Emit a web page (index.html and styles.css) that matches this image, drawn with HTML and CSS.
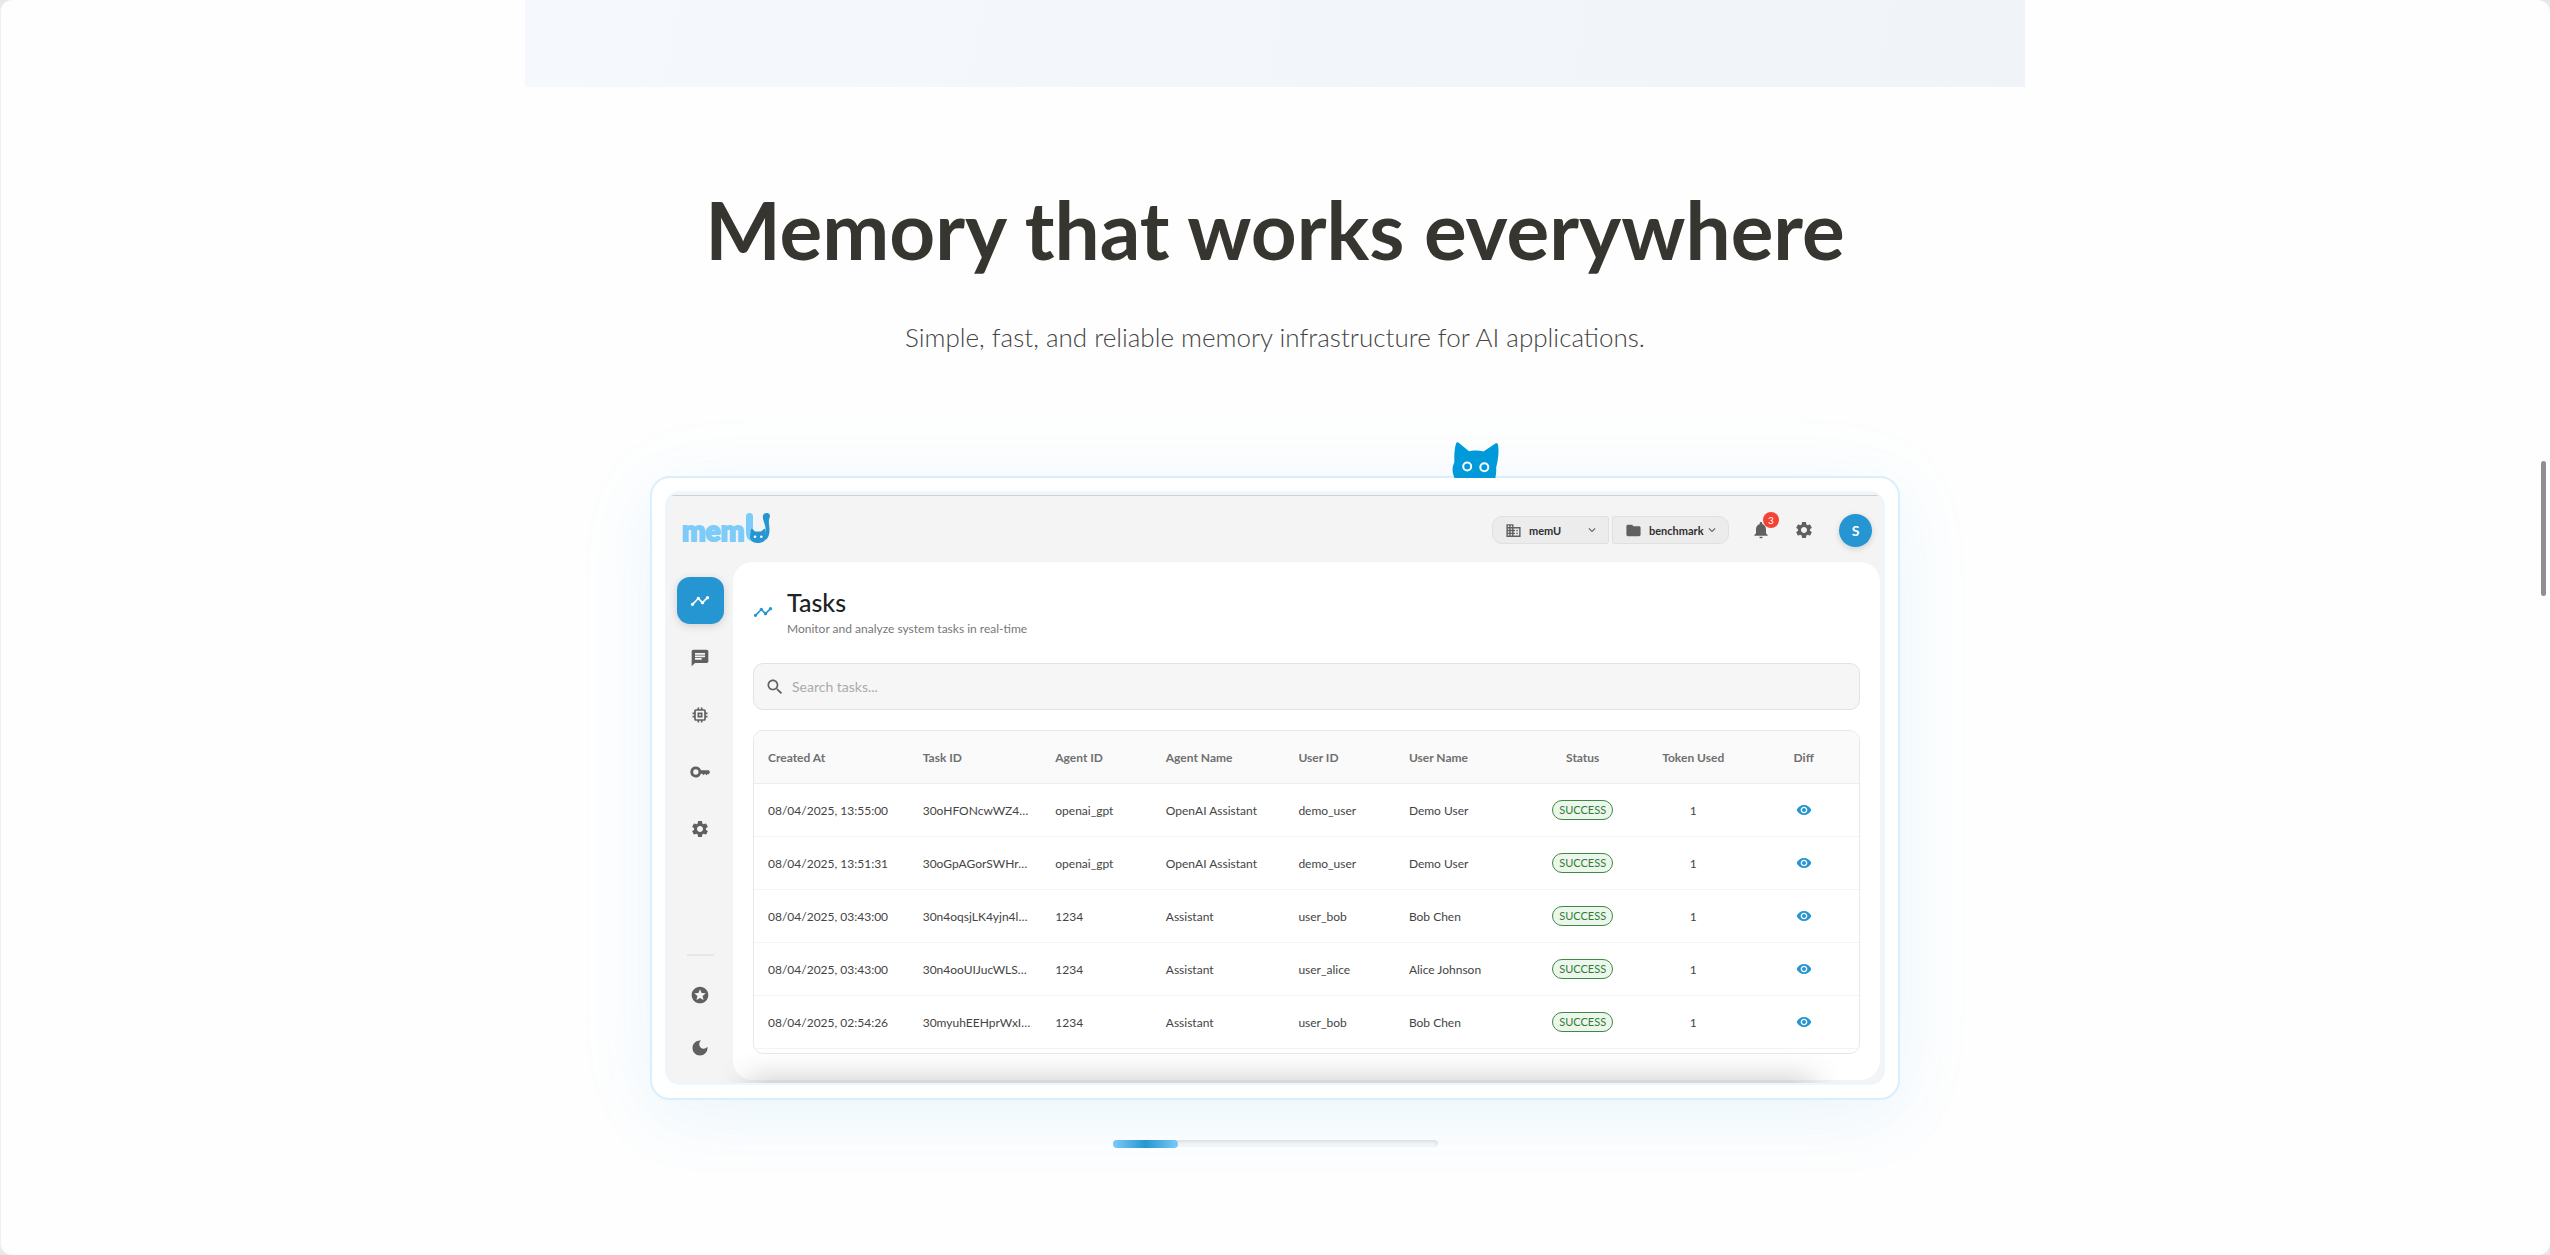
FILE: index.html
```html
<!DOCTYPE html>
<html lang="en">
<head>
  <meta charset="UTF-8">
  <meta name="viewport" content="width=device-width, initial-scale=1.0">
  <title>memU</title>
  <link rel="stylesheet" href="styles.css">
</head>
<body>
  <!-- shared icons -->
  <svg class="sprite" aria-hidden="true">
    <symbol id="i-trend" viewBox="0 0 24 24"><path d="M23 8c0 1.1-.9 2-2 2-.18 0-.35-.02-.51-.07l-3.56 3.55c.05.16.07.34.07.52 0 1.1-.9 2-2 2s-2-.9-2-2c0-.18.02-.36.07-.52l-2.55-2.55c-.16.05-.34.07-.52.07s-.36-.02-.52-.07l-4.55 4.56c.05.16.07.33.07.51 0 1.1-.9 2-2 2s-2-.9-2-2 .9-2 2-2c.18 0 .35.02.51.07l4.56-4.55C8.02 9.36 8 9.18 8 9c0-1.1.9-2 2-2s2 .9 2 2c0 .18-.02.36-.07.52l2.55 2.55c.16-.05.34-.07.52-.07s.36.02.52.07l3.55-3.56C19.02 8.35 19 8.18 19 8c0-1.1.9-2 2-2s2 .9 2 2z"/></symbol>
    <symbol id="i-chat" viewBox="0 0 24 24"><path d="M20 2H4c-1.1 0-1.99.9-1.99 2L2 22l4-4h14c1.1 0 2-.9 2-2V4c0-1.1-.9-2-2-2zM6 9h12v2H6V9zm8 5H6v-2h8v2zm4-6H6V6h12v2z"/></symbol>
    <symbol id="i-chip" viewBox="0 0 24 24"><path d="M15 9H9v6h6V9zm-2 4h-2v-2h2v2zm8-2V9h-2V7c0-1.1-.9-2-2-2h-2V3h-2v2h-2V3H9v2H7c-1.1 0-2 .9-2 2v2H3v2h2v2H3v2h2v2c0 1.1.9 2 2 2h2v2h2v-2h2v2h2v-2h2c1.1 0 2-.9 2-2v-2h2v-2h-2v-2h2zm-4 6H7V7h10v10z"/></symbol>
    <symbol id="i-key" viewBox="0 0 24 24"><path fill-rule="evenodd" d="M7 5.500a6.500 6.500 0 1 0 6.100 8.700h1.600l1.500 1.800 1.800-1.800 1.800 1.800 1.800-1.800 1 .8 1.400-3-1.400-2.200h-9.500A6.500 6.500 0 0 0 7 5.500zM7 8.800a3.200 3.200 0 1 1 0 6.400 3.200 3.200 0 0 1 0-6.400z"/></symbol>
    <symbol id="i-gear" viewBox="0 0 24 24"><path d="M19.14 12.94c.04-.3.06-.61.06-.94 0-.32-.02-.64-.07-.94l2.03-1.58c.18-.14.23-.41.12-.61l-1.92-3.32c-.12-.22-.37-.29-.59-.22l-2.39.96c-.5-.38-1.03-.7-1.62-.94l-.36-2.54c-.04-.24-.24-.41-.48-.41h-3.84c-.24 0-.43.17-.47.41l-.36 2.54c-.59.24-1.13.57-1.62.94l-2.39-.96c-.22-.08-.47 0-.59.22L2.74 8.87c-.12.21-.08.47.12.61l2.03 1.58c-.05.3-.09.63-.09.94s.02.64.07.94l-2.03 1.58c-.18.14-.23.41-.12.61l1.92 3.32c.12.22.37.29.59.22l2.39-.96c.5.38 1.03.7 1.62.94l.36 2.54c.05.24.24.41.48.41h3.84c.24 0 .44-.17.47-.41l.36-2.54c.59-.24 1.13-.56 1.62-.94l2.39.96c.22.08.47 0 .59-.22l1.92-3.32c.12-.22.07-.47-.12-.61l-2.01-1.58zM12 15.6c-1.98 0-3.6-1.62-3.6-3.6s1.62-3.6 3.6-3.6 3.6 1.62 3.6 3.6-1.62 3.6-3.6 3.6z"/></symbol>
    <symbol id="i-star" viewBox="0 0 24 24"><path d="M11.99 2C6.47 2 2 6.48 2 12s4.47 10 9.99 10C17.52 22 22 17.52 22 12S17.52 2 11.99 2zm4.24 16L12 15.45 7.77 18l1.12-4.81-3.73-3.23 4.92-.42L12 5l1.92 4.53 4.92.42-3.73 3.23L16.23 18z"/></symbol>
    <symbol id="i-moon" viewBox="0 0 24 24"><path d="M12 3c-4.97 0-9 4.03-9 9s4.03 9 9 9 9-4.03 9-9c0-.46-.04-.92-.1-1.36-.98 1.37-2.58 2.26-4.4 2.26-2.98 0-5.4-2.42-5.4-5.4 0-1.81.89-3.42 2.26-4.4-.44-.06-.9-.1-1.36-.1z"/></symbol>
    <symbol id="i-building" viewBox="0 0 24 24"><path d="M12 7V3H2v18h20V7H12zM6 19H4v-2h2v2zm0-4H4v-2h2v2zm0-4H4V9h2v2zm0-4H4V5h2v2zm4 12H8v-2h2v2zm0-4H8v-2h2v2zm0-4H8V9h2v2zm0-4H8V5h2v2zm10 12h-8v-2h2v-2h-2v-2h2v-2h-2V9h8v10zm-2-8h-2v2h2v-2zm0 4h-2v2h2v-2z"/></symbol>
    <symbol id="i-folder" viewBox="0 0 24 24"><path d="M10 4H4c-1.1 0-1.99.9-1.99 2L2 18c0 1.1.9 2 2 2h16c1.1 0 2-.9 2-2V8c0-1.1-.9-2-2-2h-8l-2-2z"/></symbol>
    <symbol id="i-down" viewBox="0 0 24 24"><path d="M7.41 8.59 12 13.17l4.59-4.58L18 10l-6 6-6-6 1.41-1.41z"/></symbol>
    <symbol id="i-bell" viewBox="0 0 24 24"><path d="M12 22c1.1 0 2-.9 2-2h-4c0 1.1.89 2 2 2zm6-6v-5c0-3.07-1.64-5.64-4.5-6.32V4c0-.83-.67-1.5-1.5-1.5s-1.5.67-1.5 1.5v.68C7.63 5.36 6 7.92 6 11v5l-2 2v1h16v-1l-2-2z"/></symbol>
    <symbol id="i-search" viewBox="0 0 24 24"><path d="M15.5 14h-.79l-.28-.27C15.41 12.59 16 11.11 16 9.5 16 5.91 13.09 3 9.5 3S3 5.91 3 9.5 5.91 16 9.5 16c1.61 0 3.09-.59 4.23-1.57l.27.28v.79l5 4.99L20.49 19l-4.99-5zm-6 0C7.01 14 5 11.99 5 9.5S7.01 5 9.5 5 14 7.01 14 9.5 11.99 14 9.5 14z"/></symbol>
    <symbol id="i-eye" viewBox="0 0 24 24"><path d="M12 4.5C7 4.5 2.73 7.61 1 12c1.73 4.39 6 7.5 11 7.5s9.27-3.11 11-7.5c-1.73-4.39-6-7.5-11-7.5zM12 17c-2.76 0-5-2.24-5-5s2.24-5 5-5 5 2.24 5 5-2.24 5-5 5zm0-8c-1.66 0-3 1.34-3 3s1.34 3 3 3 3-1.34 3-3-1.34-3-3-3z"/></symbol>
  </svg>

  <div class="page">
    <div class="band"></div>

    <section class="showcase">
      <h1 class="title">Memory that works everywhere</h1>
      <p class="subtitle">Simple, fast, and reliable memory infrastructure for AI applications.</p>

      <div class="card">
        <svg class="cat" viewBox="0 0 48 36" aria-hidden="true">
          <path fill="#0099d9" d="M2.600 36C.6 32 .2 27 .9 24.500c.5-2 1.400-3.500 1.500-5C2 13 2.500 7 4 1.500 4.500.2 6 0 7 .9L17 9.200c3-1 10-1 14.500.3L43 1.700c1.200-.8 2.700-.4 3 1 1 5 .6 14-1.800 22.800.2 4-.2 8-.9 10.500z"/>
          <g fill="#0099d9" stroke="#fff" stroke-width="2">
            <circle cx="15.200" cy="24.500" r="4"/>
            <circle cx="32.300" cy="25.300" r="4"/>
          </g>
        </svg>

        <div class="app">
          <header class="topbar">
            <a class="logo" href="#" aria-label="memU">
              <span class="logo-text">mem</span>
              <svg class="logo-cat" viewBox="66 0 25 31">
                <path fill="#7ccbf8" d="M66 3.500a3.500 3.500 0 0 1 7 0V19c0 4 7 4 10 2l2 6c-8 5-19 2-19-7z"/>
                <path fill="#2596d1" d="M71 16.500c0-1 1-1 1.500-.5l2.500 2.500h6l3-2.500c.6-.5 1.500-.2 1.500.7L86 24c0 4-3.500 6-8.500 6S70 27 70 23.500z"/>
                <path fill="#2596d1" d="M83.500 7.500C82 3 83 0 86.700 0c3 0 4 2.600 2.800 5-1.500 3.500 0 7 0 11.500 0 4.500-1 8.500-4 10.500-.8-3 .2-6 .2-10 0-4-1.400-6.500-2.200-9.500z"/>
                <circle cx="75" cy="23.800" r="1.300" fill="#fff"/>
                <circle cx="81.300" cy="23.800" r="1.300" fill="#fff"/>
              </svg>
            </a>
            <div class="pickers">
              <label class="picker picker-left">
                <svg class="icon-sm"><use href="#i-building"/></svg>
                <select aria-label="Organization"><option>memU</option></select>
                <svg class="icon-xs"><use href="#i-down"/></svg>
              </label>
              <label class="picker picker-right">
                <svg class="icon-sm"><use href="#i-folder"/></svg>
                <select aria-label="Project"><option>benchmark</option></select>
                <svg class="icon-xs"><use href="#i-down"/></svg>
              </label>
            </div>
            <div class="actions">
              <button class="icon-btn" aria-label="Notifications">
                <svg class="icon"><use href="#i-bell"/></svg>
                <span class="badge">3</span>
              </button>
              <button class="icon-btn" aria-label="Settings"><svg class="icon"><use href="#i-gear"/></svg></button>
            </div>
            <button class="avatar">S</button>
          </header>

          <div class="body">
            <nav class="sidebar">
              <a class="nav-item active" href="#" aria-label="Tasks"><svg class="icon"><use href="#i-trend"/></svg></a>
              <a class="nav-item" href="#" aria-label="Conversations"><svg class="icon"><use href="#i-chat"/></svg></a>
              <a class="nav-item" href="#" aria-label="Memory"><svg class="icon"><use href="#i-chip"/></svg></a>
              <a class="nav-item" href="#" aria-label="API keys"><svg class="icon"><use href="#i-key"/></svg></a>
              <a class="nav-item" href="#" aria-label="Settings"><svg class="icon"><use href="#i-gear"/></svg></a>
              <div class="nav-bottom">
                <button class="nav-item" aria-label="Favorites"><svg class="icon"><use href="#i-star"/></svg></button>
                <button class="nav-item" aria-label="Dark mode"><svg class="icon"><use href="#i-moon"/></svg></button>
              </div>
            </nav>

            <main class="panel">
              <div class="panel-head">
                <svg class="icon"><use href="#i-trend"/></svg>
                <div>
                  <h2>Tasks</h2>
                  <p>Monitor and analyze system tasks in real-time</p>
                </div>
              </div>

              <label class="search">
                <svg class="icon"><use href="#i-search"/></svg>
                <input type="text" placeholder="Search tasks..." aria-label="Search tasks">
              </label>

              <div class="table-wrap">
                <table>
                  <colgroup>
                    <col class="w14"><col class="w12"><col class="w10"><col class="w12"><col class="w10"><col class="w12"><col class="w10"><col class="w10"><col class="w10">
                  </colgroup>
                  <thead>
                    <tr>
                      <th>Created At</th><th>Task ID</th><th>Agent ID</th><th>Agent Name</th><th>User ID</th><th>User Name</th>
                      <th class="center">Status</th><th class="center">Token Used</th><th class="center">Diff</th>
                    </tr>
                  </thead>
                  <tbody>
                    <tr>
                      <td>08/04/2025, 13:55:00</td><td>30oHFONcwWZ4…</td><td>openai_gpt</td><td>OpenAI Assistant</td><td>demo_user</td><td>Demo User</td>
                      <td class="center"><span class="status">SUCCESS</span></td><td class="center">1</td>
                      <td class="center"><button class="view" aria-label="View diff"><svg><use href="#i-eye"/></svg></button></td>
                    </tr>
                    <tr>
                      <td>08/04/2025, 13:51:31</td><td>30oGpAGorSWHr…</td><td>openai_gpt</td><td>OpenAI Assistant</td><td>demo_user</td><td>Demo User</td>
                      <td class="center"><span class="status">SUCCESS</span></td><td class="center">1</td>
                      <td class="center"><button class="view" aria-label="View diff"><svg><use href="#i-eye"/></svg></button></td>
                    </tr>
                    <tr>
                      <td>08/04/2025, 03:43:00</td><td>30n4oqsjLK4yjn4l…</td><td>1234</td><td>Assistant</td><td>user_bob</td><td>Bob Chen</td>
                      <td class="center"><span class="status">SUCCESS</span></td><td class="center">1</td>
                      <td class="center"><button class="view" aria-label="View diff"><svg><use href="#i-eye"/></svg></button></td>
                    </tr>
                    <tr>
                      <td>08/04/2025, 03:43:00</td><td>30n4ooUIJucWLS…</td><td>1234</td><td>Assistant</td><td>user_alice</td><td>Alice Johnson</td>
                      <td class="center"><span class="status">SUCCESS</span></td><td class="center">1</td>
                      <td class="center"><button class="view" aria-label="View diff"><svg><use href="#i-eye"/></svg></button></td>
                    </tr>
                    <tr>
                      <td>08/04/2025, 02:54:26</td><td>30myuhEEHprWxI…</td><td>1234</td><td>Assistant</td><td>user_bob</td><td>Bob Chen</td>
                      <td class="center"><span class="status">SUCCESS</span></td><td class="center">1</td>
                      <td class="center"><button class="view" aria-label="View diff"><svg><use href="#i-eye"/></svg></button></td>
                    </tr>
                  </tbody>
                </table>
              </div>
            </main>
          </div>
        </div>
      </div>

      <div class="progress"><div class="progress-fill" style="width: 20%"></div></div>
    </section>
  </div>
  <div class="scroll-thumb"></div>
</body>
</html>
```

FILE: styles.css
```css
* {
  box-sizing: border-box;
}
body {
  margin: 0;
  background: #e8e8e8;
  font-family: Lato, "Open Sans", sans-serif;
  color: #333;
}
h1, h2, p {
  margin: 0;
}
button {
  border: none;
  padding: 0;
  background: none;
  font-family: inherit;
  cursor: pointer;
}
a {
  text-decoration: none;
}
svg {
  display: block;
  fill: currentColor;
}
.sprite {
  display: none;
}
.page {
  min-height: 100vh;
  overflow: hidden;
  background: #fefefe;
  box-shadow: inset 1px 0 0 #f0f0f0;
  border-radius: 12px;
}
.band {
  max-width: 1500px;
  height: 87px;
  margin: 0 auto;
  background: linear-gradient(100deg, #f5f8fc, #f0f3f8);
}

/* section heading */
.showcase {
  padding: 94px 24px 60px;
}
.title {
  font-size: 80px;
  line-height: 96px;
  font-weight: 700;
  text-align: center;
  color: #37352f;
}
.subtitle {
  margin-top: 39px;
  font-size: 26px;
  line-height: 42px;
  font-weight: 300;
  text-align: center;
  color: #444;
}

/* preview card */
.card {
  position: relative;
  max-width: 1250px;
  margin: 118px auto 0;
  padding: 13px;
  background: #fff;
  border: 2px solid #daeffd;
  border-radius: 20px;
  box-shadow: 0 20px 60px rgba(125, 200, 250, 0.1), 0 8px 90px rgba(125, 200, 250, 0.06);
}
.cat {
  position: absolute;
  left: 800px;
  bottom: 100%;
  width: 48px;
  height: 36px;
}
.app {
  position: relative;
  overflow: hidden;
  background: #f4f4f4;
  border: 2px solid #ebf6fe;
  border-radius: 15px;
}
.app::before {
  content: "";
  display: block;
  height: 2px;
  border-bottom: 1px solid #d0d0d0;
}
/* soft shade along the lower edge */
.app::after {
  content: "";
  position: absolute;
  left: 80px;
  right: 70px;
  bottom: -20px;
  height: 20px;
  box-shadow: 0 0 32px rgba(0, 0, 0, 0.3);
}
.icon {
  width: 20px;
  height: 20px;
}
.icon-sm {
  width: 17px;
  height: 17px;
  flex: none;
}
.icon-xs {
  width: 14px;
  height: 14px;
  flex: none;
}

.topbar {
  display: flex;
  align-items: center;
  height: 66px;
  padding: 2px 11px 0 15px;
  color: #606060;
}
.logo {
  display: flex;
  align-items: flex-end;
  gap: 2px;
  margin: 0 auto 4px 0;
}
.logo-text {
  font-size: 28px;
  line-height: 28px;
  font-weight: 900;
  color: #7ccbf8;
  -webkit-text-stroke: 2px #7ccbf8;
}
.logo-cat {
  width: 25px;
  height: 31px;
}
.pickers {
  display: flex;
  gap: 3px;
}
.picker {
  display: flex;
  align-items: center;
  width: 117px;
  height: 28px;
  padding: 0 9px 0 12px;
  background: #ececec;
  border: 1px solid #e0e0e0;
}
.picker-left {
  border-radius: 10px 3px 3px 10px;
}
.picker-right {
  border-radius: 3px 10px 10px 3px;
}
.picker select {
  appearance: none;
  flex: 1;
  min-width: 0;
  margin-left: 7px;
  padding: 0;
  border: none;
  background: none;
  font-family: inherit;
  font-size: 11px;
  font-weight: 700;
  color: #303030;
}
.actions {
  display: flex;
  gap: 7px;
  margin: 0 17px 0 14px;
}
.icon-btn {
  position: relative;
  display: grid;
  place-items: center;
  width: 36px;
  height: 36px;
  color: #606060;
}
.badge {
  position: absolute;
  top: 0;
  right: 0;
  width: 16px;
  height: 16px;
  border-radius: 8px;
  background: #f44336;
  color: #fff;
  font-size: 10px;
  line-height: 16px;
}
.avatar {
  width: 33px;
  height: 33px;
  border-radius: 50%;
  background: #2596d1;
  color: #fff;
  font-size: 14px;
  font-weight: 700;
  box-shadow: 0 2px 6px rgba(0, 0, 0, 0.15);
}

.body {
  display: flex;
}
.sidebar {
  display: flex;
  flex-direction: column;
  align-items: center;
  gap: 10px;
  width: 66px;
  padding: 15px 0 12px;
}
.nav-item {
  display: grid;
  place-items: center;
  width: 47px;
  height: 47px;
  border-radius: 13px;
  color: #606060;
}
.nav-item.active {
  background: #2596d1;
  color: #fff;
  box-shadow: 0 2px 8px rgba(0, 0, 0, 0.15);
}
.nav-bottom {
  display: grid;
  justify-items: center;
  gap: 6px;
  margin-top: auto;
}
.nav-bottom::before {
  content: "";
  width: 27px;
  height: 2px;
  margin-bottom: 9px;
  background: #e6e6e6;
}

.panel {
  flex: 1;
  min-width: 0;
  margin: 0 3px 3px 0;
  padding: 24px 20px 26px;
  background: #fff;
  border-radius: 20px;
}
.panel-head {
  display: flex;
  align-items: center;
  gap: 14px;
  margin-bottom: 25px;
  color: #2596d1;
}
.panel-head h2 {
  font-size: 25px;
  line-height: 32px;
  font-weight: 500;
  color: #222;
}
.panel-head p {
  margin-top: 2px;
  font-size: 12px;
  line-height: 18px;
  color: #777;
}
.search {
  display: flex;
  align-items: center;
  gap: 7px;
  height: 47px;
  padding: 0 11px;
  background: #f6f6f6;
  border: 1px solid #e2e2e2;
  border-radius: 10px;
  color: #606060;
}
.search input {
  flex: 1;
  border: none;
  outline: none;
  padding: 0;
  background: none;
  font-family: inherit;
  font-size: 14px;
}
.search input::placeholder {
  color: #aaa;
}

/* task table */
.table-wrap {
  margin-top: 20px;
  padding-bottom: 4px;
  overflow: hidden;
  border: 1px solid #e8e8e8;
  border-radius: 10px;
}
table {
  width: 100%;
  table-layout: fixed;
  border-collapse: separate;
  border-spacing: 0;
  font-size: 12px;
}
.w14 { width: 14%; }
.w12 { width: 12%; }
.w10 { width: 10%; }
th, td {
  height: 53px;
  padding: 0 14px;
  border-bottom: 1px solid #f3f3f3;
  text-align: left;
  white-space: nowrap;
}
th {
  background: #fafafa;
  border-bottom-color: #ededed;
  font-weight: 700;
  color: #707070;
}
td {
  color: #444;
}
th.center, td.center {
  text-align: center;
}
.status {
  display: inline-block;
  padding: 0 6px;
  border: 1px solid #3c8b40;
  border-radius: 10px;
  background: #edf6ed;
  color: #2e7d32;
  font-size: 11px;
  line-height: 18px;
}
.view {
  color: #2596d1;
  vertical-align: middle;
}
.view svg {
  width: 16px;
  height: 16px;
}

.progress {
  max-width: 325px;
  height: 7px;
  margin: 40px auto 0;
  border-radius: 4px;
  background: #f7f9fa;
  box-shadow: inset 0 2px 4px rgba(0, 0, 0, 0.1);
}
.progress-fill {
  height: 8px;
  border-radius: 4px;
  background: linear-gradient(90deg, #7ccbf8, #2596d1 50%, #7ccbf8);
}
.scroll-thumb {
  position: fixed;
  top: 461px;
  right: 4px;
  width: 5px;
  height: 135px;
  border-radius: 3px;
  background: #8f8f8f;
}
```
